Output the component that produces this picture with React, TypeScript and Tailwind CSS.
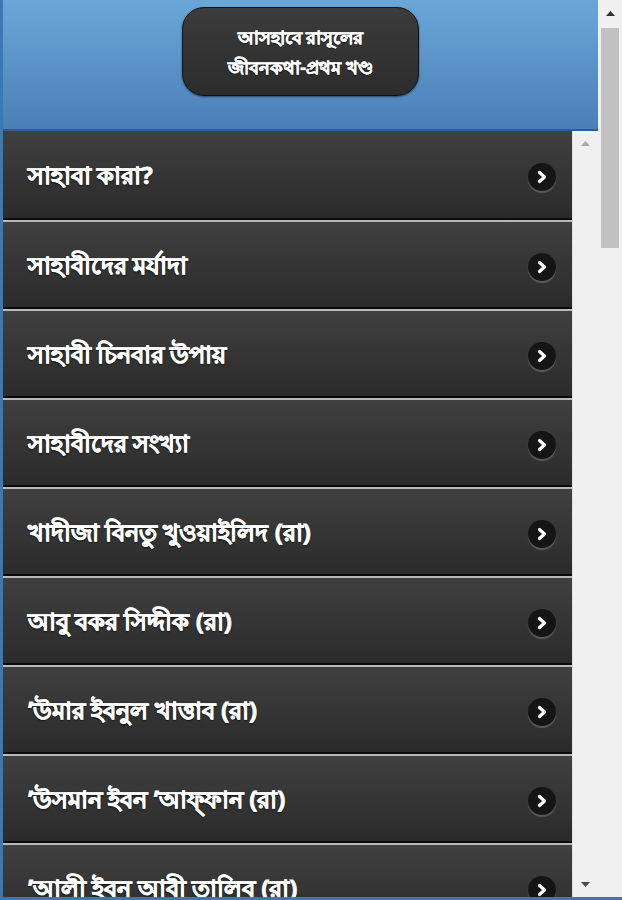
import React from 'react';

const items = [
  'সাহাবা কারা?',
  'সাহাবীদের মর্যাদা',
  'সাহাবী চিনবার উপায়',
  'সাহাবীদের সংখ্যা',
  'খাদীজা বিনতু খুওয়াইলিদ (রা)',
  'আবু বকর সিদ্দীক (রা)',
  '’উমার ইবনুল খাত্তাব (রা)',
  '’উসমান ইবন ’আফ্ফান (রা)',
  '’আলী ইবন আবী তালিব (রা)',
];

const Chevron = () => (
  <div className="w-[28px] h-[28px] mt-[4px] rounded-full bg-[#151515] shadow-[0_2px_1px_rgba(120,120,120,0.6)] flex items-center justify-center">
    <svg width="14" height="14" viewBox="0 0 14 14">
      <path d="M4.5 2.5 L9.5 7 L4.5 11.5" fill="none" stroke="#fff" strokeWidth="3.2" strokeLinecap="round" strokeLinejoin="round" />
    </svg>
  </div>
);

const Arrow = ({ up, className }: { up?: boolean; className?: string }) => (
  <svg width="9" height="5" viewBox="0 0 9 5" className={className}>
    <path d={up ? 'M0 5 L4.5 0 L9 5 Z' : 'M0 0 L4.5 5 L9 0 Z'} fill="currentColor" />
  </svg>
);

export default function App() {
  return (
    <div className="w-[622px] h-[900px] flex overflow-hidden border-b-[3px] border-[#3b78b4] bg-[#f0f0f0] font-['Noto_Sans',sans-serif]">
      {/* page */}
      <div className="w-[598px] flex flex-col border-l-[3px] border-[#3b78b4]">
        <div className="h-[131px] shrink-0 bg-gradient-to-b from-[#6aa7d7] to-[#4a7fb8] border-b-2 border-[#2f5f90] flex justify-center pt-[7px]">
          <div className="w-[237px] h-[89px] rounded-[22px] border border-[#111] bg-gradient-to-b from-[#3c3c3c] to-[#2c2c2c] shadow-[0_1px_2px_rgba(0,0,0,0.5)] flex flex-col items-center justify-center text-white text-[18px] font-bold leading-[30px] [text-shadow:0_1px_1px_#000] [-webkit-text-stroke:0.6px_#fff]">
            <span>আসহাবে রাসূলের</span>
            <span>জীবনকথা-প্রথম খণ্ড</span>
          </div>
        </div>
        <div className="flex flex-1 min-h-0">
          <div className="w-[569px] overflow-hidden flex flex-col">
            {items.map((t, i) => (
              <div key={i} className="shrink-0 h-[89px] border-t-2 border-[#b9b9b9] first:border-t-0">
                <div className="h-full border-b-2 border-[#0a0a0a] bg-gradient-to-b from-[#404040] to-[#2b2b2b] flex items-center justify-between pl-[25px] pr-[16px]">
                  <span className="text-white text-[24px] font-bold [text-shadow:0_1px_2px_#000] [-webkit-text-stroke:0.8px_#fff]">{t}</span>
                  <Chevron />
                </div>
              </div>
            ))}
          </div>
          <div className="w-[26px] bg-[#f0f0f0] flex flex-col items-center justify-between py-[10px] border-l border-[#e0e0e0]">
            <Arrow up className="text-[#a8a8a8]" />
            <Arrow className="text-[#4a4a4a]" />
          </div>
        </div>
      </div>
      {/* outer scrollbar */}
      <div className="w-[24px] flex flex-col items-center bg-[#f0f0f0]">
        <div className="h-[26px] flex items-center">
          <Arrow up className="text-[#303030]" />
        </div>
        <div className="w-[18px] h-[220px] bg-[#c1c1c1] mt-[2px]" />
      </div>
    </div>
  );
}
